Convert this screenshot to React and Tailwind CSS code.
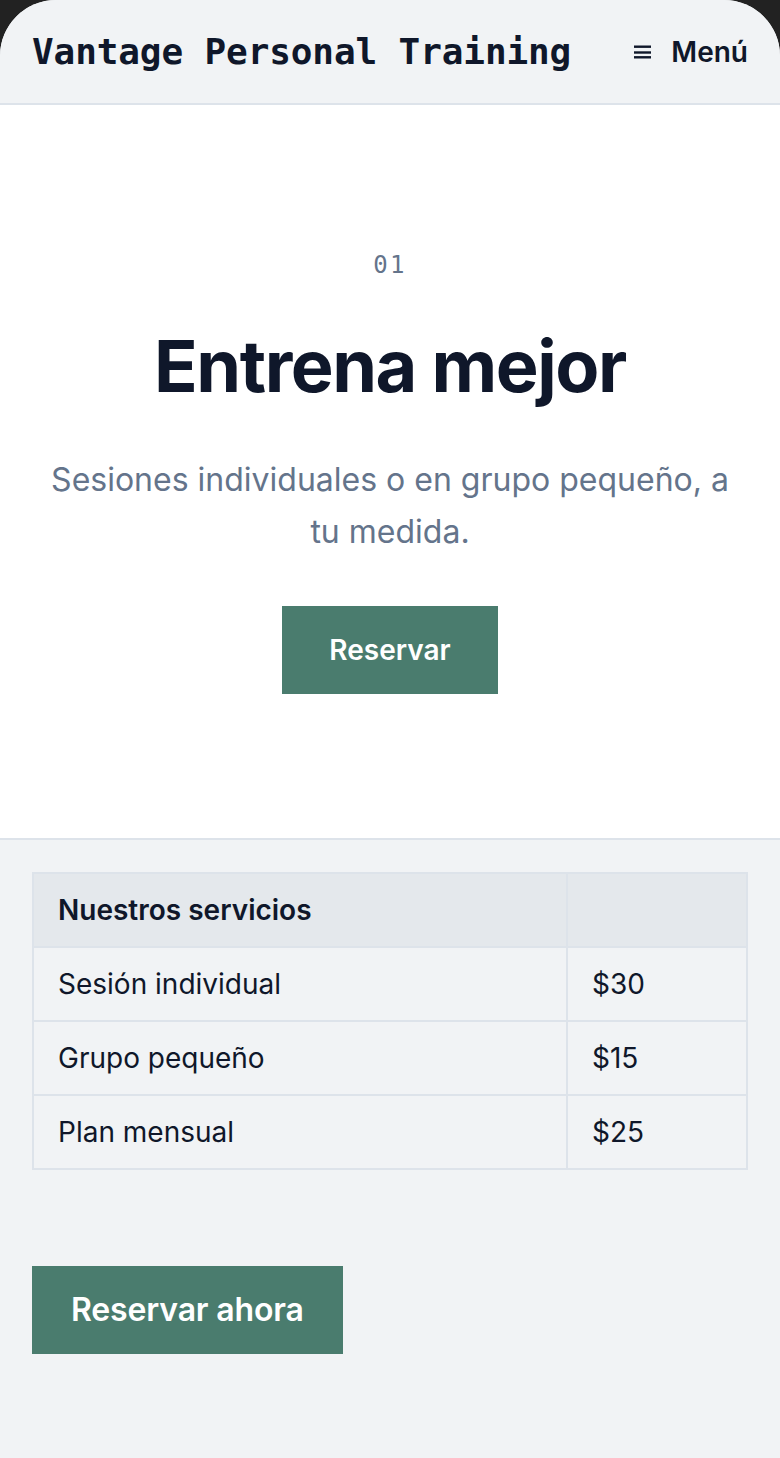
import React from "react";

const services = [
  { name: "Sesión individual", price: "$30" },
  { name: "Grupo pequeño", price: "$15" },
  { name: "Plan mensual", price: "$25" },
];

function MenuIcon() {
  return (
    <svg width="17" height="14" viewBox="0 0 17 14" aria-hidden="true">
      <rect x="0" y="0.5" width="17" height="2.4" fill="#0f172a" />
      <rect x="0" y="6.3" width="17" height="2.4" fill="#0f172a" />
      <rect x="0" y="11.1" width="17" height="2.4" fill="#0f172a" />
    </svg>
  );
}

export default function App() {
  return (
    <div className="min-h-screen bg-[#222222]">
      <div
        className="min-h-screen overflow-hidden rounded-t-[56px] bg-[#f1f3f5] text-[#0f172a]"
        style={{ fontFamily: "Inter, 'Noto Sans', sans-serif" }}
      >
        {/* header */}
        <header className="flex h-[105px] items-center justify-between border-b-2 border-[#dde3ea] bg-[#f1f3f5] px-[32px]">
          <span
            className="text-[36px] font-bold leading-[44px] tracking-[-0.003em]"
            style={{ fontFamily: "'DejaVu Sans Mono', 'Liberation Mono', monospace" }}
          >
            Vantage Personal Training
          </span>
          <button className="flex items-center gap-[20px] text-[28px] font-semibold leading-[40px]">
            <MenuIcon />
            Menú
          </button>
        </header>

        {/* hero */}
        <section className="flex flex-col items-center border-b-2 border-[#dde3ea] bg-white px-[48px] py-[144px] text-center">
          <span
            className="text-[24px] leading-[32px] tracking-[0.1em] text-[#64748b]"
            style={{ fontFamily: "'DejaVu Sans Mono', 'Liberation Mono', monospace" }}
          >
            01
          </span>
          <h1 className="mt-[45px] text-[72px] font-bold leading-[80px] tracking-[-0.02em]">
            Entrena mejor
          </h1>
          <p className="mt-[48px] text-[32px] leading-[52px] text-[#64748b]">
            Sesiones individuales o en grupo pequeño, a tu medida.
          </p>
          <button className="mt-[48px] bg-[#4a7c6e] px-[47px] py-[24px] text-[28px] font-semibold leading-[40px] text-white">
            Reservar
          </button>
        </section>

        {/* services */}
        <section className="px-[32px] pb-[104px] pt-[32px]">
          <table className="w-full border-collapse border-2 border-[#dde3ea] text-left text-[28px] leading-[40px]">
            <thead>
              <tr className="bg-[#e4e8ec]">
                <th className="border-2 border-[#dde3ea] px-[24px] py-[16px] font-semibold">
                  Nuestros servicios
                </th>
                <th className="w-[180px] border-2 border-[#dde3ea] px-[24px] py-[16px]"></th>
              </tr>
            </thead>
            <tbody>
              {services.map((s) => (
                <tr key={s.name}>
                  <td className="border-2 border-[#dde3ea] px-[24px] py-[16px]">{s.name}</td>
                  <td className="border-2 border-[#dde3ea] px-[24px] py-[16px]">{s.price}</td>
                </tr>
              ))}
            </tbody>
          </table>

          <button className="mt-[96px] bg-[#4a7c6e] px-[39px] py-[20px] text-[32px] font-semibold leading-[48px] tracking-[-0.005em] text-white">
            Reservar ahora
          </button>
        </section>
      </div>
    </div>
  );
}
